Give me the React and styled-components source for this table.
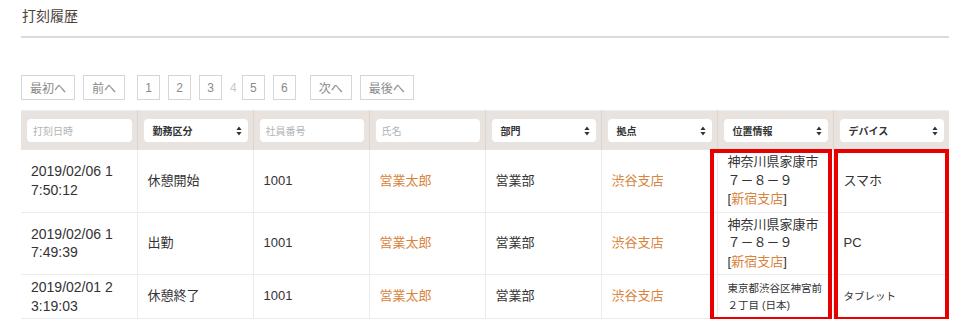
import React from 'react';
import styled, { createGlobalStyle } from 'styled-components';

const GlobalStyle = createGlobalStyle`
  body {
    margin: 0;
    background: #fff;
    font-family: "Liberation Sans", "Noto Sans CJK JP", sans-serif;
    color: #333;
  }
`;

const Page = styled.div`
  padding: 0 10px 0 21px;
`;

const Title = styled.h2`
  margin: 0;
  padding: 6px 0 0 1px;
  height: 30px;
  font-size: 14px;
  font-weight: normal;
  line-height: 18px;
  color: #4a423b;
  font-family: "Noto Sans CJK JP", sans-serif;
  border-bottom: 2px solid #dfdad4;
`;

const Pager = styled.div`
  display: flex;
  align-items: center;
  margin-top: 37px;
  height: 25px;
`;

const PagerGroup = styled.div`
  display: flex;
  align-items: center;
  gap: ${(p) => p.$gap || 8}px;
  margin-right: ${(p) => p.$after || 0}px;
`;

const PageButton = styled.button`
  height: 25px;
  padding: 0 ${(p) => (p.$num ? 7 : 8)}px;
  min-width: ${(p) => (p.$num ? 23 : 0)}px;
  border: 1px solid #d6d6d6;
  background: #fff;
  color: #8a8a8a;
  font-size: 12px;
  font-family: "Liberation Sans", "Noto Sans CJK JP", sans-serif;
  cursor: pointer;
`;

const CurrentPage = styled.span`
  font-size: 12px;
  color: #c8c8c8;
  margin: 0 -3px 0 0;
`;

const TableWrap = styled.div`
  position: relative;
  margin-top: 10px;
  width: 928px;
`;

const Table = styled.table`
  width: 928px;
  table-layout: fixed;
  border-collapse: collapse;
  border-top: 1px solid #eee;
`;

const HeadCell = styled.th`
  background: #e8e3de;
  padding: 8px 5px 8px 6px;
  border-right: 1px solid #ddd6cf;
  &:last-child {
    border-right: none;
  }
`;

const FilterInput = styled.input`
  box-sizing: border-box;
  width: 100%;
  height: 23px;
  border: none;
  border-radius: 4px;
  padding: 0 6px;
  font-size: 10px;
  font-family: "Noto Sans CJK JP", sans-serif;
  background: #fff;
  outline: none;
  &::placeholder {
    color: #b3b3b3;
  }
`;

const SelectBox = styled.div`
  box-sizing: border-box;
  height: 23px;
  border-radius: 4px;
  background: #fff;
  padding: 0 6px 0 9px;
  display: flex;
  align-items: center;
  justify-content: space-between;
  font-size: 10px;
  font-weight: bold;
  color: #333;
  text-align: left;
  font-family: "Noto Sans CJK JP", sans-serif;
`;

const Cell = styled.td`
  padding: 3px 8px 3px 10px;
  border: 1px solid #ebebeb;
  border-top: none;
  font-size: ${(p) => (p.$small ? '10.5px' : '13px')};
  line-height: ${(p) => (p.$small ? '17px' : '18.5px')};
  vertical-align: middle;
  color: #333;
  &:first-child {
    border-left: none;
  }
  &:last-child {
    border-right: none;
  }
`;

const DateText = styled.span`
  display: block;
  max-width: 86px;
  font-size: 14px;
  word-break: break-all;
`;

const LinkText = styled.span`
  color: #d8843c;
`;

const Mark = styled.div`
  position: absolute;
  top: 39px;
  left: ${(p) => p.$left}px;
  width: ${(p) => p.$width}px;
  height: 172px;
  box-sizing: border-box;
  border: 4px solid #e80000;
  pointer-events: none;
`;

const Arrows = () => (
  <svg width="6" height="10" viewBox="0 0 6 10">
    <path d="M3 0.5L5.6 4H0.4Z M0.4 6H5.6L3 9.5Z" fill="#333" />
  </svg>
);

const filters = [
  { type: 'input', label: '打刻日時' },
  { type: 'select', label: '勤務区分' },
  { type: 'input', label: '社員番号' },
  { type: 'input', label: '氏名' },
  { type: 'select', label: '部門' },
  { type: 'select', label: '拠点' },
  { type: 'select', label: '位置情報' },
  { type: 'select', label: 'デバイス' },
];

const rows = [
  {
    time: '2019/02/06 17:50:12',
    kind: '休憩開始',
    no: '1001',
    name: '営業太郎',
    dept: '営業部',
    base: '渋谷支店',
    place: { addr: '神奈川県家康市', num: '７－８－９', spot: '新宿支店' },
    device: 'スマホ',
  },
  {
    time: '2019/02/06 17:49:39',
    kind: '出勤',
    no: '1001',
    name: '営業太郎',
    dept: '営業部',
    base: '渋谷支店',
    place: { addr: '神奈川県家康市', num: '７－８－９', spot: '新宿支店' },
    device: 'PC',
  },
  {
    time: '2019/02/01 23:19:03',
    kind: '休憩終了',
    no: '1001',
    name: '営業太郎',
    dept: '営業部',
    base: '渋谷支店',
    place: { text: '東京都渋谷区神宮前２丁目 (日本)' },
    device: 'タブレット',
    small: true,
  },
];

const App = () => {
  return (
    <Page>
      <GlobalStyle />
      <Title>打刻履歴</Title>

      <Pager>
        <PagerGroup $after={12}>
          <PageButton>最初へ</PageButton>
          <PageButton>前へ</PageButton>
        </PagerGroup>
        <PagerGroup $after={14}>
          <PageButton $num>1</PageButton>
          <PageButton $num>2</PageButton>
          <PageButton $num>3</PageButton>
          <CurrentPage>4</CurrentPage>
          <PageButton $num>5</PageButton>
          <PageButton $num>6</PageButton>
        </PagerGroup>
        <PagerGroup>
          <PageButton>次へ</PageButton>
          <PageButton>最後へ</PageButton>
        </PagerGroup>
      </Pager>

      <TableWrap>
        <Table>
          <thead>
            <tr>
              {filters.map((f) => (
                <HeadCell key={f.label}>
                  {f.type === 'input' ? (
                    <FilterInput placeholder={f.label} />
                  ) : (
                    <SelectBox>
                      <span>{f.label}</span>
                      <Arrows />
                    </SelectBox>
                  )}
                </HeadCell>
              ))}
            </tr>
          </thead>
          <tbody>
            {rows.map((r) => (
              <tr key={r.time}>
                <Cell>
                  <DateText>{r.time}</DateText>
                </Cell>
                <Cell>{r.kind}</Cell>
                <Cell>{r.no}</Cell>
                <Cell>
                  <LinkText>{r.name}</LinkText>
                </Cell>
                <Cell>{r.dept}</Cell>
                <Cell>
                  <LinkText>{r.base}</LinkText>
                </Cell>
                <Cell $small={r.small}>
                  {r.place.text ? (
                    r.place.text
                  ) : (
                    <>
                      {r.place.addr}
                      <br />
                      {r.place.num}
                      <br />[<LinkText>{r.place.spot}</LinkText>]
                    </>
                  )}
                </Cell>
                <Cell $small={r.small}>{r.device}</Cell>
              </tr>
            ))}
          </tbody>
        </Table>
        <Mark $left={689} $width={122} />
        <Mark $left={813} $width={115} />
      </TableWrap>
    </Page>
  );
};

export default App;
